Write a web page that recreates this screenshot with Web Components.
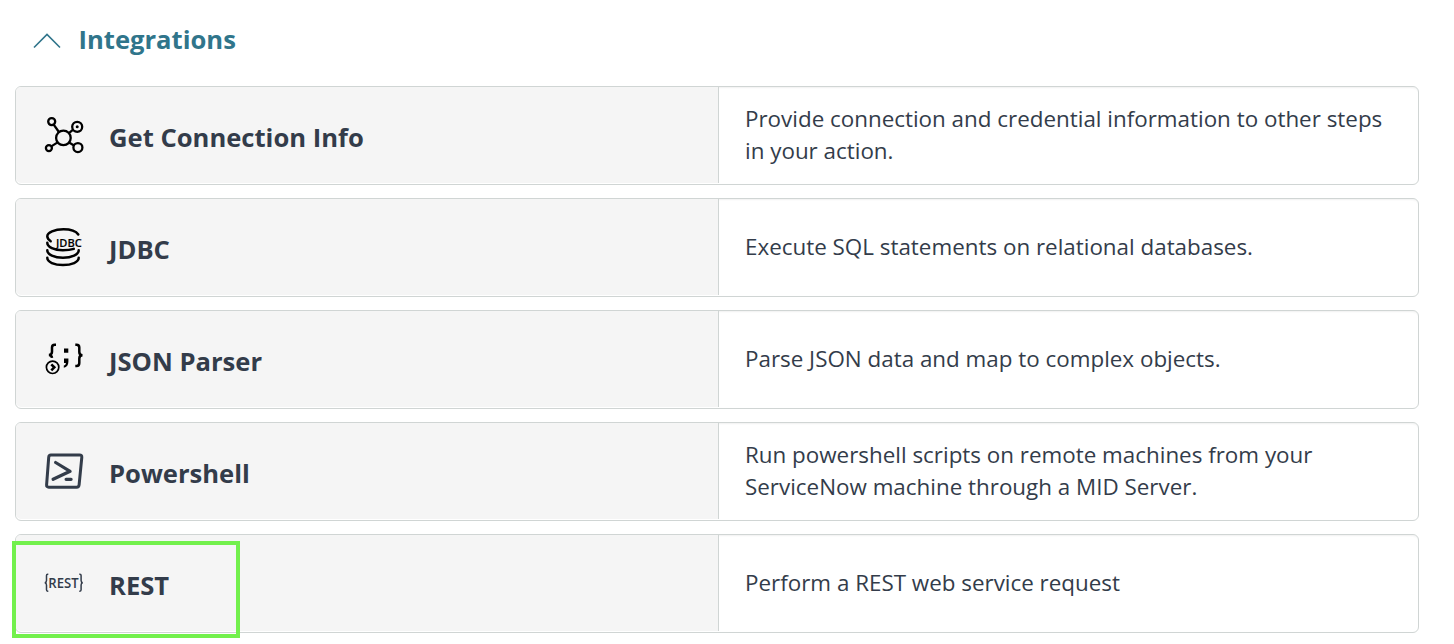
<!DOCTYPE html>
<html lang="en">
<head>
<meta charset="UTF-8">
<title>Integrations</title>
<style>
    body {
        margin: 0;
        height: 644px;
        overflow: hidden;
        background: #fff;
        color: #333c4a;
        font-family: 'Open Sans', sans-serif;
    }
</style>
</head>
<body>
<step-group heading="Integrations">
    <step-row name="Get Connection Info">
        <step-icon slot="icon" type="connection"></step-icon>
        Provide connection and credential information to other steps in your action.
    </step-row>
    <step-row name="JDBC">
        <step-icon slot="icon" type="jdbc"></step-icon>
        Execute SQL statements on relational databases.
    </step-row>
    <step-row name="JSON Parser">
        <step-icon slot="icon" type="json"></step-icon>
        Parse JSON data and map to complex objects.
    </step-row>
    <step-row name="Powershell">
        <step-icon slot="icon" type="powershell"></step-icon>
        Run powershell scripts on remote machines from your ServiceNow machine through a MID Server.
    </step-row>
    <step-row name="REST" highlighted>
        <step-icon slot="icon" type="rest"></step-icon>
        Perform a REST web service request
    </step-row>
</step-group>

<script>
const ICONS = {
    connection: `
        <g transform="translate(-.3 2.600)">
            <g fill="none" stroke="#000" stroke-width="2.300">
                <circle cx="19.700" cy="20.300" r="7.300"/>
                <circle cx="8" cy="4" r="3.500"/>
                <circle cx="33.500" cy="9.200" r="5"/>
                <circle cx="5.200" cy="30.500" r="3"/>
                <circle cx="34.200" cy="30" r="4.500"/>
                <path d="M10 7l5.200 7.400M25.200 15.500l4.200-3.400M13.900 24.800l-6.300 4M25.400 25l4.900 2.800"/>
            </g>
            <circle cx="33.500" cy="9.200" r="1.500"/>
        </g>`,
    jdbc: `
        <g transform="translate(0 1)">
            <g fill="none" stroke="#000" stroke-width="2.500" stroke-linecap="round">
                <path d="M34.300 6.500C32 3.200 26.500 1.300 19.500 1.300C10.500 1.300 3.300 4.500 3.300 8.300C3.300 10.200 4.600 11.800 6.700 13.200"/>
                <path d="M3.300 14.800c0 4.300 6.900 7.500 15.500 7.500c4.200 0 8-.4 11-1.400"/>
                <path d="M3.300 22.300c0 4.300 7 7.500 15.700 7.500s15.700-3.200 15.700-7.500"/>
                <path d="M3.300 29.800c0 4.300 7 7.300 15.700 7.300s15.700-3 15.700-7.300"/>
            </g>
            <text x="12" y="19" font-size="10.800" font-weight="600" stroke="#000" stroke-width=".15" textLength="25.700" lengthAdjust="spacingAndGlyphs">JDBC</text>
        </g>`,
    json: `
        <g fill="none" stroke="#000" stroke-width="2.500">
            <path d="M12 5.700h-1.300c-2 0-2.700 1-2.700 2.800v4.200c0 2-1 3-3 3.300c1.800.2 2.800 1 3 2.800"/>
            <path d="M31.300 5.700h1.300c2 0 2.700 1 2.700 2.800v4.500c0 2 1 3.200 3.200 3.200c-2.200 0-3.200 1.200-3.200 3.200v4.600c0 2-.7 3-2.700 3h-1.300"/>
            <circle cx="8.600" cy="28.300" r="6.200" stroke-width="1.700"/>
            <path d="M7.300 25.300l3 3-3 3" stroke-width="2.600"/>
        </g>
        <path d="M20 9.500h4.300v4.300H20zM20 19.500h4.400v3c0 3.500-1.400 5.700-4.600 6.200v-2.200c1.300-.3 2-1.100 2.100-2.500H20z"/>`,
    powershell: `
        <g transform="translate(.600 2.500)" fill="none" stroke="#333c4a" stroke-linecap="round" stroke-linejoin="round">
            <path d="M6.300 1.500h28.700q2.400 0 2.200 2.400l-2.700 27.500q-.2 2.300-2.500 2.300H4.200q-2.400 0-2.200-2.400l2.100-27.500q.2-2.300 2.200-2.300z" stroke-width="3"/>
            <path d="M11 9l14.500 8.800L8.500 25.800M21.500 25.800h5" stroke-width="3.200"/>
        </g>`,
    rest: `
        <g transform="translate(0 8)">
            <g fill="none" stroke="#333c4a" stroke-width="1.500">
                <path d="M4.300 3.200H3.700Q2.500 3.200 2.500 4.600v4.900q0 2-1.700 2.300q1.700.3 1.700 2.300v4.700q0 1.400 1.200 1.400h.6"/>
                <path d="M35.300 3.200h.6q1.200 0 1.200 1.400v4.900q0 2 1.600 2.300q-1.600.3-1.600 2.300v4.700q0 1.400-1.200 1.400h-.6"/>
            </g>
            <text x="4.300" y="16.600" font-size="13.500" font-weight="600" textLength="30.300" lengthAdjust="spacingAndGlyphs" fill="#333c4a">REST</text>
        </g>`
};

class StepIcon extends HTMLElement {
    constructor() {
        super();
        this.attachShadow({ mode: 'open' });
    }

    connectedCallback() {
        this.shadowRoot.innerHTML = `
            <style>
                :host {
                    display: block;
                    width: 40px;
                    height: 40px;
                }

                svg {
                    display: block;
                    overflow: visible;
                }

                text {
                    font-family: 'Open Sans', sans-serif;
                }
            </style>
            <svg xmlns="http://www.w3.org/2000/svg" width="40" height="40" viewBox="0 0 40 40">${ICONS[this.getAttribute('type')]}</svg>
        `;
    }
}

class StepRow extends HTMLElement {
    constructor() {
        super();
        this.attachShadow({ mode: 'open' });
    }

    connectedCallback() {
        this.shadowRoot.innerHTML = `
            <style>
                :host {
                    display: grid;
                    grid-template-columns: 703px 1fr;
                    position: relative;
                    box-sizing: border-box;
                    height: 99px;
                    border: 1px solid #d0d5d4;
                    border-radius: 6px;
                    background: #fff;
                    box-shadow: inset 0 2px 2px -1px rgba(0, 0, 0, 0.06);
                }

                .step-name {
                    display: flex;
                    align-items: center;
                    gap: 25px;
                    margin-bottom: 1px;
                    padding-left: 28px;
                    background: #f5f5f5;
                    border-right: 1px solid #d0d5d4;
                    border-radius: 5px 0 0 5px;
                }

                h3 {
                    margin: 6px 0 0;
                    font-size: 25.6px;
                    line-height: 36px;
                    font-weight: 700;
                }

                .step-description {
                    display: flex;
                    align-items: center;
                    padding: 0 26px 1px;
                }

                p {
                    margin: 0;
                    font-size: 22.4px;
                    line-height: 32px;
                }

                .highlight {
                    position: absolute;
                    box-sizing: border-box;
                    left: -4px;
                    top: 6px;
                    width: 228px;
                    height: 97px;
                    border: 4px solid #72f04c;
                }
            </style>
            <div class="step-name">
                <slot name="icon"></slot>
                <h3>${this.getAttribute('name')}</h3>
            </div>
            <div class="step-description">
                <p><slot></slot></p>
            </div>
            ${this.hasAttribute('highlighted') ? '<div class="highlight"></div>' : ''}
        `;
    }
}

class StepGroup extends HTMLElement {
    constructor() {
        super();
        this.attachShadow({ mode: 'open' });
    }

    connectedCallback() {
        this.shadowRoot.innerHTML = `
            <style>
                :host {
                    display: block;
                    padding: 20px 35px 0 15px;
                }

                header {
                    display: flex;
                    align-items: center;
                    gap: 17.5px;
                    height: 40px;
                    margin-bottom: 26px;
                    padding-left: 18px;
                    color: #30758b;
                }

                header svg {
                    margin-top: 2px;
                }

                h2 {
                    margin: 0;
                    font-size: 25.6px;
                    line-height: 40px;
                    font-weight: 700;
                }

                .steps {
                    display: grid;
                    gap: 13px;
                }
            </style>
            <header>
                <svg width="28" height="16" viewBox="0 0 28 16"><path d="M1 14.500L14 1.500L27 14.500" fill="none" stroke="currentColor" stroke-width="1.600"/></svg>
                <h2>${this.getAttribute('heading')}</h2>
            </header>
            <div class="steps">
                <slot></slot>
            </div>
        `;
    }
}

customElements.define('step-icon', StepIcon);
customElements.define('step-row', StepRow);
customElements.define('step-group', StepGroup);
</script>
</body>
</html>
